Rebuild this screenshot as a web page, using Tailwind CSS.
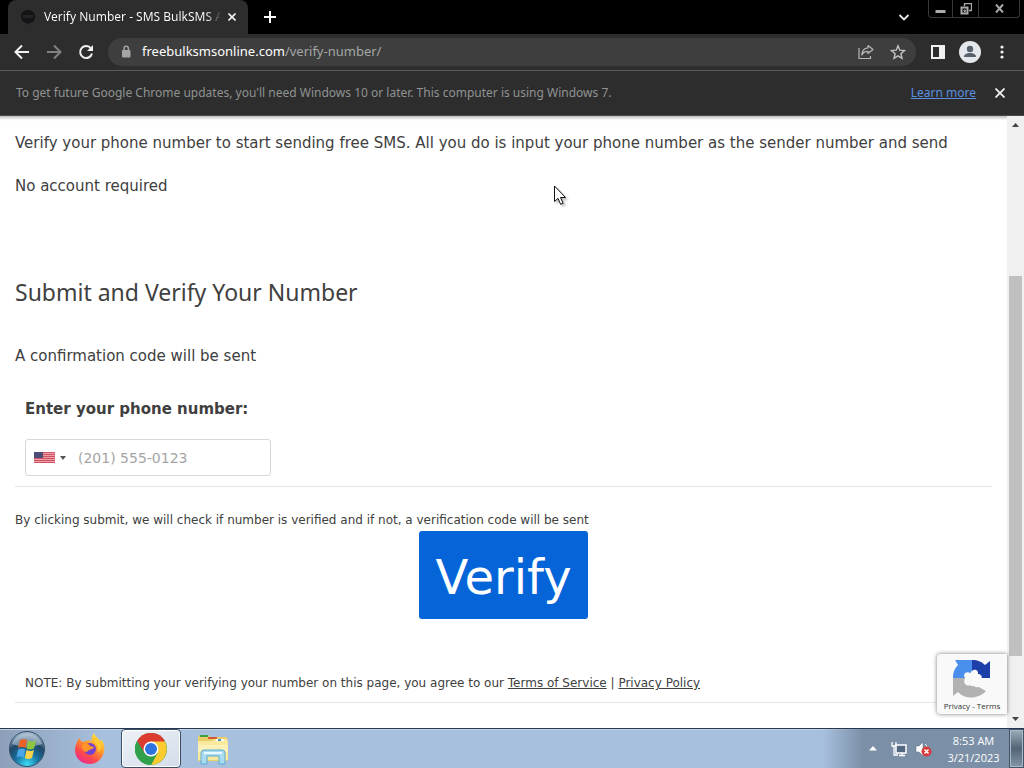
<!DOCTYPE html>
<html lang="en">
<head>
<meta charset="utf-8">
<meta name="viewport" content="width=device-width, initial-scale=1">
<title>Verify Number - SMS BulkSMS API</title>
<script src="https://cdn.jsdelivr.net/npm/@tailwindcss/browser@4"></script>
</head>
<body class="h-screen flex flex-col overflow-hidden bg-white font-['Noto_Sans',sans-serif]">

<!-- Tab strip -->
<header class="shrink-0 flex flex-col bg-black text-white">
  <div class="h-[34px] flex items-start">
    <div class="self-stretch w-60 ml-2 pl-3 pr-1 flex items-center bg-[#2d2d2d] rounded-t-lg">
      <svg class="size-4 shrink-0" viewBox="0 0 16 16"><path d="M8 1C3.500 1 1 4 1 7.500S4 14 6.500 14L8 15.500 9.500 14C13 14 15 11 15 7.500S12.500 1 8 1z" fill="#141416"/><path d="M4 6v3M6 6v3M8 6v3M10 6v3M12 6v3" stroke="#343438"/></svg>
      <span class="ml-2 w-44 whitespace-nowrap text-xs bg-linear-to-r from-white from-92% to-[#444] bg-clip-text text-transparent">Verify Number - SMS BulkSMS A</span>
      <button aria-label="Close tab" class="size-6 shrink-0 flex items-center justify-center"><svg class="size-2" viewBox="0 0 8 8" stroke="#f1f1f1" stroke-width="1.600"><path d="M0.500 0.500l7 7M7.500 0.500l-7 7"/></svg></button>
    </div>
    <button aria-label="New tab" class="self-stretch w-11 flex items-center justify-center"><svg class="size-3" viewBox="0 0 12 12" stroke="#fff" stroke-width="2"><path d="M6 0v12M0 6h12"/></svg></button>
    <button aria-label="Search tabs" class="ml-auto self-stretch w-8 mr-2 flex items-center justify-center"><svg class="size-3" viewBox="0 0 12 12" fill="none" stroke="#e8e8e8" stroke-width="1.800"><path d="M1.500 4l4.500 4.500L10.500 4"/></svg></button>
    <div class="flex h-[18px] mr-1 border border-t-0 border-[#383838] rounded-b divide-x divide-[#383838]">
      <button aria-label="Minimize" class="w-6 flex items-center justify-center"><svg width="11" height="12" viewBox="0 0 11 12"><path d="M0.500 7h10v3h-10z" fill="#aaa"/></svg></button>
      <button aria-label="Restore" class="w-[26px] flex items-center justify-center"><svg width="12" height="12" viewBox="0 0 12 12" fill="none" stroke="#aaa"><path d="M4.500 3V.500h7v7H9" stroke-width="1.300"/><path d="M1.500 4.500h6v6h-6z" stroke-width="2"/><path d="M4 7h1.500v1.500H4z"/></svg></button>
      <button aria-label="Close" class="w-10 flex items-center justify-center"><svg width="9" height="9" viewBox="0 0 9 9" stroke="#aaa" stroke-width="2"><path d="M1 0.500l7 8M8 0.500l-7 8"/></svg></button>
    </div>
  </div>

  <!-- Toolbar -->
  <div class="h-[37px] flex items-center pl-2 pr-2 bg-[#2d2d2d] border-b border-[#5b5d5d]">
    <button aria-label="Back" class="w-7 flex justify-center"><svg class="size-4" viewBox="0 0 16 16" fill="none" stroke="#f1f1f1" stroke-width="2"><path d="M15 8H2M8 1.500L1.500 8 8 14.500"/></svg></button>
    <button aria-label="Forward" class="ml-1 w-7 flex justify-center"><svg class="size-4" viewBox="0 0 16 16" fill="none" stroke="#818181" stroke-width="2"><path d="M1 8h13M8 1.500L14.500 8 8 14.500"/></svg></button>
    <button aria-label="Reload" class="ml-1 w-7 flex justify-center"><svg class="size-4" viewBox="0 0 16 16" fill="none" stroke="#f1f1f1" stroke-width="2"><path d="M13 4.500A6 6 0 1 0 14 9.500"/><path d="M15 1v6H9z" fill="#f1f1f1" stroke="none"/></svg></button>
    <div class="flex-1 ml-2 h-7 flex items-center rounded-full bg-[#3e3e3e] pl-3 pr-0.5">
      <svg class="w-3 h-4 shrink-0" viewBox="0 0 12 16"><path d="M4 7V4.500a2.200 2.200 0 0 1 4.400 0V7" fill="none" stroke="#a4a4a4" stroke-width="1.500"/><rect x="2" y="6" width="8.500" height="7.500" rx="1" fill="#a4a4a4"/></svg>
      <a href="#" class="ml-[10px] flex-1 text-[13px] text-[#a3a7a6] whitespace-nowrap"><span class="text-white">freebulksmsonline.com</span>/verify-number/</a>
      <button aria-label="Share" class="w-8 flex justify-center"><svg class="size-4" viewBox="0 0 16 16" fill="none" stroke="#b8b8b8" stroke-width="1.200"><path d="M1 4v10.500h11.500V12"/><path d="M10 1.500L15 5.500 10 9.500V7.300C7 7.300 5 8.300 3.800 11 4 7 6 4.200 10 3.800z" stroke-linejoin="round"/></svg></button>
      <button aria-label="Bookmark" class="w-8 flex justify-center"><svg class="size-4" viewBox="0 0 16 16" fill="none" stroke="#c2c2c2" stroke-width="1.400"><path d="M8 1.800l1.800 4.400 4.700.4-3.600 3.100 1.100 4.600L8 11.800l-4 2.500 1.100-4.600L1.500 6.600l4.700-.4z"/></svg></button>
    </div>
    <button aria-label="Side panel" class="ml-2 w-7 flex justify-center"><svg class="size-4" viewBox="0 0 16 16"><path d="M1 1h14v14H1zM3 3v10h6V3z" fill="#f1f1f1" fill-rule="evenodd"/></svg></button>
    <button aria-label="Profile" class="ml-0.5 w-8 flex justify-center"><svg width="22" height="22" viewBox="0 0 22 22"><circle cx="11" cy="11" r="11" fill="#e4e8ec"/><circle cx="11" cy="8" r="3.200" fill="#56616c"/><path d="M5 16c0-3 3-4 6-4s6 1 6 4z" fill="#56616c"/></svg></button>
    <button aria-label="Menu" class="ml-0.5 w-7 flex justify-center"><svg class="size-4" viewBox="0 0 16 16" fill="#f1f1f1"><circle cx="8" cy="3" r="1.600"/><circle cx="8" cy="8" r="1.600"/><circle cx="8" cy="13" r="1.600"/></svg></button>
  </div>

  <!-- Update notice -->
  <div class="h-[45px] flex items-center pl-4 pr-3 bg-[#2d2d2d] border-b border-[#4a4a4a] text-xs">
    <p class="flex-1 text-[#8f9392] whitespace-nowrap">To get future Google Chrome updates, you'll need Windows 10 or later. This computer is using Windows 7.</p>
    <a href="#" class="text-[#5b8fe0] underline">Learn more</a>
    <button aria-label="Dismiss" class="ml-3 size-6 flex items-center justify-center"><svg width="10" height="10" viewBox="0 0 10 10" stroke="#f1f1f1" stroke-width="1.800"><path d="M0.500 0.500l9 9M9.500 0.500l-9 9"/></svg></button>
  </div>
</header>

<!-- Web page -->
<div class="relative flex-1 min-h-0 flex shadow-[inset_0_5px_3px_-3px_#bbb]">
  <main class="flex-1 min-w-0 overflow-hidden pl-[15px] pr-[15px] pt-[15px] font-['DejaVu_Sans',sans-serif] text-[15px] leading-6 text-[#404040]">
    <p>Verify your phone number to start sending free SMS. All you do is input your phone number as the sender number and send</p>
    <p class="mt-[19px]">No account required</p>
    <h2 class="mt-[78px] font-['Noto_Sans',sans-serif] text-[23px] leading-8">Submit and Verify Your Number</h2>
    <p class="mt-9">A confirmation code will be sent</p>
    <form onsubmit="return false">
      <div class="px-[10px] pt-[29px] pb-[10px]">
        <label for="phone" class="block font-bold">Enter your phone number:</label>
        <div class="mt-[18px] w-[246px] h-[37px] flex items-center border border-[#d8d8dc] rounded-[3px]">
          <button type="button" aria-label="Country: United States" class="w-[46px] pl-2 flex items-center">
            <svg width="21" height="11" viewBox="0 0 21 11"><path d="M0 0h21v11H0z" fill="#ee9ca6"/><path d="M0 .5h21M0 2.500h21M0 4.500h21M0 6.500h21M0 8.500h21M0 10.500h21" stroke="#cd5464"/><path d="M0 0h9v6H0z" fill="#4b4d77"/></svg>
            <svg class="ml-[5px]" width="6" height="4" viewBox="0 0 6 4"><path d="M0 0h6L3 4z" fill="#555"/></svg>
          </button>
          <input id="phone" type="tel" placeholder="(201) 555-0123" class="flex-1 min-w-0 h-full pl-[6px] text-sm outline-none placeholder:text-[#a5a5a5]">
        </div>
      </div>
      <hr class="border-[#e5e5e5]">
      <p class="mt-[23px] text-xs leading-5">By clicking submit, we will check if number is verified and if not, a verification code will be sent</p>
      <button type="submit" class="block mx-auto mt-px h-[88px] px-4 pt-1 rounded-[3px] bg-[#0565d8] text-white text-5xl">Verify</button>
    </form>
    <p class="mt-[54px] px-[10px] pb-[9px] text-xs leading-5">NOTE: By submitting your verifying your number on this page, you agree to our <a href="#" class="underline">Terms of Service</a> | <a href="#" class="underline">Privacy Policy</a></p>
    <hr class="border-[#e5e5e5]">
  </main>

  <aside class="absolute right-[17px] bottom-[14px] w-[70px] h-[60px] pt-1 flex flex-col items-center bg-[#f9f9f9] rounded-l-sm shadow-[0_0_4px_#777] text-[#333]">
    <svg width="40" height="40" viewBox="0 0 40 40"><path d="M1 20C1 14 3 10 6 7L3 2h17v11l-6 7z" fill="#4a8fec"/><path d="M20 2c6 0 10 2 13 5l5-4v17H23l-3-7z" fill="#1d3faa"/><path d="M1 38V20h14l4 8h6l9 5C27 41 13 42 6 34z" fill="#b2b2b2"/><path d="M13 20c-3-4 2-8 6-4 0-6 8-5 7 0 5 0 5 6 0 6l-1 1 4 4c-2 3-7 3-9-1-4 4-10 0-7-6z" fill="#f9f9f9"/></svg>
    <p class="font-['Open_Sans',sans-serif] text-[8px] leading-4 whitespace-nowrap"><a href="#">Privacy</a> - <a href="#">Terms</a></p>
  </aside>

  <div aria-hidden="true" class="w-[17px] flex flex-col items-center bg-[#f0f0f0] py-[7px]">
    <svg width="7" height="4" viewBox="0 0 7 4"><path d="M0 4h7L3.500 0z" fill="#444"/></svg>
    <div class="grow-[149]"></div>
    <div class="grow-[379] w-[13px] bg-[#c0c0c0]"></div>
    <div class="grow-[61]"></div>
    <svg width="7" height="4" viewBox="0 0 7 4"><path d="M0 0h7L3.500 4z" fill="#444"/></svg>
  </div>

  <!-- Mouse pointer -->
  <svg class="absolute left-[554px] top-[69px] drop-shadow-[2px_2px_1px_#0004]" width="14" height="21" viewBox="0 0 14 21"><path d="M.5 1v15.500l3.500-3.200 2.600 6 2.500-1.100-2.600-5.700h5z" fill="#fff" stroke="#111"/></svg>
</div>

<!-- Taskbar -->
<footer class="shrink-0 h-10 flex items-center border-t border-[#26384f] bg-linear-to-r from-[#8d9fb8] via-[#a7c0de] via-10% to-[#a7c0de] shadow-[inset_0_1px_0_#c5d2e2] text-white">
  <button aria-label="Start" class="w-[54px] flex justify-center"><svg width="38" height="38" viewBox="0 0 38 38"><defs><radialGradient id="orb" cx=".5" cy=".95" r=".9"><stop offset="0" stop-color="#3ee0f8"/><stop offset=".4" stop-color="#16709f"/><stop offset=".7" stop-color="#204666"/><stop offset="1" stop-color="#9eb3c7"/></radialGradient></defs><circle cx="19" cy="19" r="17.500" fill="url(#orb)" stroke="#324e68"/><path d="M4 14A16 16 0 0 1 34 14Q19 20 4 14" fill="#d8e5ef" opacity=".45"/><path d="M12 10q4-2 7 0l-1.500 8q-4-2-7.500 0z" fill="#e8632a"/><path d="M20 10.500q4 2 8 0l-2 8q-4 2-7.500 0z" fill="#8dc63f"/><path d="M10 19.500q4-2 7.300 0l-1.600 8q-4-2-7.200 0z" fill="#4ba5e6"/><path d="M18.500 20q4 2 7.500 0l-2 8q-4 2-7.200 0z" fill="#fbd34a"/></svg></button>
  <button aria-label="Firefox" class="ml-1 w-[63px] flex justify-center"><svg width="32" height="32" viewBox="0 0 32 32"><defs><linearGradient id="fox" x1=".8" y1="0" x2=".2" y2="1"><stop offset="0" stop-color="#fff044"/><stop offset=".4" stop-color="#ff9a2a"/><stop offset=".7" stop-color="#ff4a4a"/><stop offset="1" stop-color="#e6259a"/></linearGradient></defs><path d="M5 5l3 4 4-1 3-1 2 2c1-3 0-5 3-9 1 4 5 5 6 8l2-1c2 4 3 8 2 12C28 27 22 31 16 31 7 31 1 25 1 17 1 12 3 9 5 5z" fill="url(#fox)"/><circle cx="16" cy="16" r="6" fill="#7542cf"/><path d="M8 12c3-2 6-2 8 1l4 1c-1 3-6 2-7 5-3 0-6-3-5-7z" fill="#ff9526"/><path d="M18 8c5 2 7 6 6 11 4-2 4-8 0-12z" fill="#ffca32"/></svg></button>
  <button aria-label="Google Chrome" class="self-stretch w-[60px] flex items-center justify-center rounded-sm border border-[#3c4e66] bg-linear-to-br from-[#eef2f7] to-[#d2dce9] shadow-[inset_0_0_0_1px_#fff]"><svg width="32" height="32" viewBox="0 0 32 32"><circle cx="16" cy="16" r="16" fill="#31a04b"/><path d="M2.100 8A16 16 0 0 1 29.900 8L22 16H9.500z" fill="#dc3c30"/><path d="M16 8.500h13.900A16 16 0 0 1 16 32l6.500-12z" fill="#fccb30"/><path d="M2.100 8L9.500 20 16 15V8z" fill="#dc3c30"/><path d="M2.100 8L9.500 20l6.500 3.500L16 32A16 16 0 0 1 2.100 8z" fill="#31a04b"/><path d="M16 32l6.500-12H16l-2 4z" fill="#31a04b"/><circle cx="16" cy="16" r="7.500" fill="#fff"/><circle cx="16" cy="16" r="6" fill="#2f73df"/></svg></button>
  <button aria-label="File Explorer" class="ml-1 w-[56px] flex justify-center"><svg width="34" height="32" viewBox="0 0 34 32"><path d="M2 4l2-2h8l2 2h17v24H2z" fill="#e9cf68"/><path d="M4 2h8v2H4z" fill="#3e9d45"/><path d="M12 4h9v2h-9z" fill="#d45a35"/><path d="M2 8h14l3-2h12l1 3v18H2z" fill="#f9e99e"/><path d="M20 6h8v2h-8z" fill="#fff"/><path d="M22 6h3v2h-3z" fill="#4694d1"/><path d="M2 12h30v7H2z" fill="#fcf2b8"/><path d="M5 31V20q0-3 3-3h18q3 0 3 3v11h-6v-8H11v8z" fill="#a9dcf1" stroke="#5faacd"/><path d="M8 20h18" stroke="#e8faff" stroke-width="2"/></svg></button>

  <div class="ml-auto pl-10 flex items-center self-stretch bg-linear-to-r from-[#7b8fa7]/0 to-[#7b8fa7] to-20%">
    <button aria-label="Show hidden icons" class="w-5 flex justify-center"><svg width="8" height="5" viewBox="0 0 8 5"><path d="M0 4.500h8L4 0z" fill="#fff"/></svg></button>
    <button aria-label="Network" class="ml-1 w-6 flex justify-center"><svg width="16" height="16" viewBox="0 0 16 16"><path d="M5 4h10v8H5z" fill="#526880" stroke="#fff" stroke-width="1.500"/><path d="M8 14.500h6M11 12v3" stroke="#fff" stroke-width="1.500"/><path d="M1 1v4h4V1M3 5v9h4" fill="none" stroke="#fff" stroke-width="1.300"/></svg></button>
    <button aria-label="Volume muted" class="w-6 flex justify-center"><svg width="17" height="16" viewBox="0 0 17 16"><path d="M1 5h3l4-4v14l-4-4H1z" fill="#fff" stroke="#596979" stroke-width=".5"/><path d="M10 3q2 1 2 4" fill="none" stroke="#fff"/><circle cx="11.500" cy="10.500" r="5" fill="#d73b3b"/><path d="M9.500 8.500l4 4m0-4l-4 4" stroke="#fff" stroke-width="1.500"/></svg></button>
    <time datetime="2023-03-21T08:53" class="pl-[3px] w-[74px] text-center font-['Open_Sans',sans-serif] text-[11px] leading-[17px]">8:53 AM<br>3/21/2023</time>
    <button aria-label="Show desktop" class="self-stretch w-[15px] border border-[#42556a] bg-linear-to-b from-[#9eacb9] via-[#526476] to-[#8395a7] shadow-[inset_0_0_0_1px_#a8b8c8]"></button>
  </div>
</footer>
</body>
</html>
